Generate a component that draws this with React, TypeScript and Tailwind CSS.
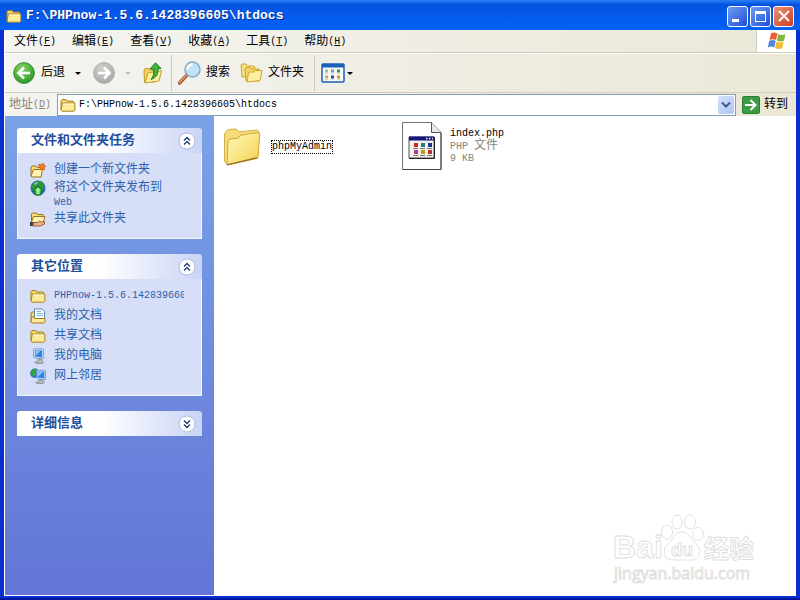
import type { ReactNode } from "react";

const SONG = "font-['Liberation_Mono','Noto_Sans_CJK_SC',monospace]";

function FolderGlyph({ className = "h-4 w-4" }: { className?: string }) {
  return (
    <svg viewBox="0 0 16 16" className={className} aria-hidden="true">
      <path d="M1 13V3.500L2 2.500h4l1.200 1.600H13l1 1V6" fill="#f6d66b" stroke="#a8801c" />
      <path d="M1 13.200 2.300 6h12.600v7.300l-.9.900H2z" fill="#fdeb9a" stroke="#a8801c" />
      <path d="M3 7h11" stroke="#fffbe0" />
    </svg>
  );
}

function NewFolderGlyph() {
  return (
    <svg viewBox="0 0 16 16" className="h-4 w-4" aria-hidden="true">
      <path d="M1 14V5l1-1h4l1 1.500h6V7" fill="#f7dc79" stroke="#99751c" />
      <path d="m1 14.200 2.500-6.700h9L11 15H2z" fill="#fff3b4" stroke="#99751c" />
      <path d="m9 2 2.500.3L13.500 1l.5 2 2 1.300-1.500 1.200V8L12 7l-2 1 .3-2.500L8.500 4z" fill="#ee7a22" stroke="#c65a12" strokeWidth=".5" />
    </svg>
  );
}

function PublishGlyph() {
  return (
    <svg viewBox="0 0 16 16" className="h-4 w-4" aria-hidden="true">
      <circle cx="8" cy="8" r="7.600" fill="#2d6fb8" />
      <path d="M1.500 5c2-4 7-5 10-3l3 4-2 3H3L.8 9zM3 2.500l4-2 2 2-3 2z" fill="#2f9440" />
      <path d="M4 3.500 7 2l1 1-3 2z" fill="#8cc6ea" />
      <path d="m8 6 5.500 5H11v4H5v-4H2.500z" fill="#2fc335" stroke="#14661e" strokeWidth=".9" />
      <path d="m8 7.800 2.800 2.700H9.500V14h-3v-3.500H5.200z" fill="#a8ee92" />
    </svg>
  );
}

function ShareGlyph() {
  return (
    <svg viewBox="0 0 16 16" className="h-4 w-4" aria-hidden="true">
      <path d="M1.500 11V3l1-1h4l1 1.500H13V5" fill="#f7dc79" stroke="#99751c" />
      <path d="m1.500 11 2-5.500H15L13 12H2z" fill="#fff3b4" stroke="#99751c" />
      <path d="M0 11h3v4H0z" fill="#3b3b4c" />
      <path d="M3 11.500h4.500l2-1.500 2 1 3-.5v2.500l-4 2H3z" fill="#eab083" stroke="#8c4a24" strokeWidth=".8" />
    </svg>
  );
}

function DocumentsGlyph() {
  return (
    <svg viewBox="0 0 16 16" className="h-4 w-4" aria-hidden="true">
      <path d="M1 14V5l1-1h3v10z" fill="#f6d66b" stroke="#a8801c" />
      <path d="M4.500 1H12l2.500 2.500V11h-10z" fill="#fff" stroke="#6487b4" />
      <path d="M6.500 3.500H11M6.500 5.500H13M6.500 7.500H13" stroke="#79b8d8" />
      <path d="m1 14 .5-5h2l1 1.500H15V14l-1 1H2z" fill="#fdeb9a" stroke="#a8801c" />
    </svg>
  );
}

function ComputerGlyph() {
  return (
    <svg viewBox="0 0 16 16" className="h-4 w-4" aria-hidden="true">
      <path d="m4 1 8.500-.5 1 1 .2 8.500-1 1L5 10 3.500 9V2z" fill="#c2dcf6" stroke="#7191c7" strokeWidth=".8" />
      <path d="m5 2.500 7-.3.2 7.300L5 8.500z" fill="#2f83e4" />
      <path d="m5.500 3 5-.2-5 5z" fill="#85c8ff" />
      <path d="M8 11h3.500v1.500l2 1-1 2H6L4.500 14 8 13z" fill="#b8b7bd" stroke="#77777f" strokeWidth=".6" />
    </svg>
  );
}

function NetworkGlyph() {
  return (
    <svg viewBox="0 0 16 16" className="h-4 w-4" aria-hidden="true">
      <circle cx="4.800" cy="5.300" r="4.700" fill="#2c70c9" />
      <path d="M.5 5c0-3 3-5 6-4L5 4l1 2-2 3zM7 3l2 1v3L7 8z" fill="#39a348" />
      <path d="m6.500 2.500 8-.5 1 1 .2 8-1 1-7-1-1.200-1z" fill="#c2dcf6" stroke="#6b8cc4" strokeWidth=".8" />
      <path d="m7.500 3.800 6.700-.3.200 7-6.900-1z" fill="#2f83e4" />
      <path d="m8 4.300 5-.2-5 4.600z" fill="#85c8ff" />
      <path d="M9 12h3.500v1l2 1-1 1.500H7L5.500 14.500 9 13.500z" fill="#b8b7bd" stroke="#77777f" strokeWidth=".6" />
    </svg>
  );
}

function WindowsFlag() {
  return (
    <svg viewBox="0 0 20 20" className="h-5 w-5" aria-hidden="true">
      <path d="M4 2.500q3-2 6.500 0L9 9Q6 7.300 2.500 9z" fill="#ea6035" />
      <path d="M11.300 3q3.500 1.700 7.200.3L17 9.700q-3.500 1.500-7.200-.2z" fill="#81b83c" />
      <path d="M2.200 10q3.300-1.800 6.500 0L7.200 16.400q-3-1.900-6.500 0z" fill="#4d87e0" />
      <path d="M9.500 10.500q3.700 1.700 7.200.2l-1.500 6.500q-3.700 1.600-7.200-.2z" fill="#f4bc36" />
    </svg>
  );
}

function RoundArrow({ disabled = false }: { disabled?: boolean }) {
  return (
    <svg viewBox="0 0 22 22" className="h-[22px] w-[22px]" aria-hidden="true">
      <defs>
        <radialGradient id={disabled ? "fwd" : "bck"} cx=".4" cy=".3" r=".7">
          <stop offset="0" stopColor={disabled ? "#d2d2cf" : "#86d764"} />
          <stop offset="1" stopColor={disabled ? "#a9a9a7" : "#2c992a"} />
        </radialGradient>
      </defs>
      <circle cx="11" cy="11" r="10.400" fill={disabled ? "url(#fwd)" : "url(#bck)"} stroke={disabled ? "#a8a8a6" : "#35882d"} strokeWidth=".9" />
      <path
        d={disabled ? "M5 11h11M11 5.500l5.500 5.500-5.500 5.500" : "M17 11H6M11 5.500 5.500 11l5.500 5.500"}
        fill="none"
        stroke="#fff"
        strokeWidth="2.600"
      />
    </svg>
  );
}

function UpFolder() {
  return (
    <svg viewBox="0 0 20 22" className="h-[22px] w-5" aria-hidden="true">
      <path d="M1.500 20 1 8l1-1.500h4L7.500 8H12v12z" fill="#f0d060" stroke="#c59b2c" />
      <path d="m2 21 3-10 13.500-2.500L16 19z" fill="#fdf0a0" stroke="#c59b2c" />
      <path d="M12.500.800 18 6.500h-3c.5 5-1.500 9-7 11 2.500-3 3.200-6 2.600-10.500H7z" fill="#42b53b" stroke="#1f7a22" />
    </svg>
  );
}

function Magnifier() {
  return (
    <svg viewBox="0 0 24 24" className="h-6 w-6" aria-hidden="true">
      <path d="m9 14-7.500 8" stroke="#a65a34" strokeWidth="3.600" strokeLinecap="round" />
      <path d="m8.500 14-7 7.500" stroke="#e79a6a" strokeWidth="1.500" strokeLinecap="round" />
      <circle cx="14.500" cy="8.500" r="7.500" fill="#bfe2f8" stroke="#8aa9c5" strokeWidth="1.500" />
      <path d="M9.500 8.500a5 5 0 0 1 5-5" fill="none" stroke="#fff" strokeWidth="2.500" />
    </svg>
  );
}

function FoldersGlyph() {
  return (
    <svg viewBox="0 0 24 20" className="h-5 w-6" aria-hidden="true">
      <path d="M2 14 1 2l1-1h4l1.500 2H14l1 2v9z" fill="#f7e07c" stroke="#d0a432" />
      <path d="M6 18 5 6l1-1.500h4L12 6h7v12z" fill="#f3d566" stroke="#d0a432" />
      <path d="m7 19 1.500-9 1-1H14l1.500-1.500h6.500L20 17.500z" fill="#fdf0a2" stroke="#d0a432" />
    </svg>
  );
}

function ViewsGlyph() {
  return (
    <svg viewBox="0 0 24 20" className="h-5 w-6" aria-hidden="true">
      <rect x="1" y="1" width="22" height="18" rx="1" fill="#f8f8f2" stroke="#1b5fb8" strokeWidth="1.500" />
      <path d="M1 1h22v3.500H1z" fill="#1b5fb8" />
      <path d="M4 6.500h3v3H4z" fill="#aab3ba" />
      <path d="M10 6.500h3v3h-3z" fill="#7c98b0" />
      <path d="M16 6.500h3v3h-3z" fill="#3b9251" />
      <path d="M4 12.500h3v3H4z" fill="#e0a05c" />
      <path d="M10 12.500h3v3h-3z" fill="#21508f" />
      <path d="M16 12.500h3v3h-3z" fill="#cf973b" />
      <path d="M4 10.500h3M10 10.500h3M16 10.500h3M4 16.500h3M10 16.500h3M16 16.500h3" stroke="#c9ccd0" strokeWidth=".8" />
    </svg>
  );
}

function Caret({ className }: { className: string }) {
  return (
    <svg viewBox="0 0 6 3" className={`h-[3px] w-1.5 ${className}`} aria-hidden="true">
      <path d="M0 0h6L3 3z" fill="currentColor" />
    </svg>
  );
}

function LargeFolder() {
  return (
    <svg viewBox="0 0 38 38" className="h-[38px] w-[38px] shrink-0" aria-hidden="true">
      <defs>
        <linearGradient id="folderFront" x1="0" y1="0" x2="1" y2="1">
          <stop offset="0" stopColor="#fffab8" />
          <stop offset="1" stopColor="#f4cf52" />
        </linearGradient>
      </defs>
      <path d="M3.500 36 1.500 33V6L3 3.500 5 1.500l8-.5 3 2.800L34 2l2 2-1 26z" fill="#f5dc78" stroke="#d3b04c" />
      <path d="M4 36.500 5 13.500q.2-2 2-2.300l8-1.200 3-3L35.500 4.500q1.500 0 1.200 2L35 28.500q-.2 1.500-1.500 2L6 36.800z" fill="url(#folderFront)" stroke="#cfa63b" />
      <path d="m4 36.800 30-7" stroke="#9b7524" strokeWidth="1.300" />
    </svg>
  );
}

function PhpFile() {
  const dots: [number, number, string][] = [
    [12, 22, "#b92f24"], [19, 22, "#237e85"], [26, 22, "#22358e"],
    [12, 29, "#b53a91"], [19, 29, "#c49b20"], [26, 29, "#b5352a"],
  ];
  return (
    <svg viewBox="0 0 40 48" className="h-12 w-10 shrink-0" aria-hidden="true">
      <path d="M.5.500h29l9.500 10v37H.5z" fill="#fff" stroke="#6f6f6f" />
      <path d="M29.500.500v10H39" fill="#e9e9e9" stroke="#555" />
      <path d="M39 11v36.500H1" fill="none" stroke="#444" />
      <path d="M7 15h25v21H7z" fill="#f4f0ec" stroke="#505050" />
      <path d="M7 14.500h25v4H7z" fill="#111a7b" />
      <path d="M24 16.500h1.500M27 16.500h1.500M30 16.500h1" stroke="#fff" strokeWidth="1.500" />
      {dots.map(([x, y, color]) => (
        <g key={`${x}-${y}`}>
          <rect x={x} y={y - 1} width="4" height="4" fill={color} />
          <path d={`M${x - 1} ${y + 4.5}h5`} stroke="#555" strokeWidth=".8" />
        </g>
      ))}
      <path d="M32.500 15v21.500H7" fill="none" stroke="#222" />
    </svg>
  );
}

function Latin({ children }: { children: ReactNode }) {
  return <span className="text-[10px]">{children}</span>;
}

function MenuItem({ label, hotkey }: { label: string; hotkey: string }) {
  return (
    <button type="button" className="flex items-center whitespace-nowrap">
      {label}
      <Latin>
        (<u className="underline-offset-1">{hotkey}</u>)
      </Latin>
    </button>
  );
}

function Panel({ title, open, children }: { title: string; open: boolean; children?: ReactNode }) {
  return (
    <section>
      <button
        type="button"
        aria-expanded={open}
        className="flex h-[25px] w-full items-center justify-between rounded-t-[3px] bg-linear-to-r from-white from-45% to-[#c9d4f6] pr-1.5 pl-3.5 text-[13px] font-bold text-[#1f4f9d]"
      >
        {title}
        <svg viewBox="0 0 18 18" className="h-[18px] w-[18px]" aria-hidden="true">
          <circle cx="9" cy="9" r="8" fill="#fff" stroke="#b4bcd8" />
          <path
            d={open ? "M6 8.500l3-3 3 3M6 12.500l3-3 3 3" : "M6 5.500l3 3 3-3M6 9.500l3 3 3-3"}
            fill="none"
            stroke="#1c3f78"
            strokeWidth="1.400"
          />
        </svg>
      </button>
      {open && (
        <ul className="flex flex-col border border-t-0 border-[#f4f6fe] bg-[#d6dff7] px-3 pt-2 pb-2.5 text-[12px] text-[#2c5fae]">
          {children}
        </ul>
      )}
    </section>
  );
}

function Task({ icon, children }: { icon: ReactNode; children: ReactNode }) {
  return (
    <li>
      <a href="#" className="flex items-start gap-2 leading-[18px]">
        <span className="shrink-0 pt-px">{icon}</span>
        <span className="min-w-0 overflow-hidden">{children}</span>
      </a>
    </li>
  );
}

const captionButton =
  "flex h-[21px] w-[21px] items-center justify-center rounded-[3px] border border-white";

export default function App() {
  return (
    <div className={`flex h-screen flex-col border-b-2 border-[#0018a0] bg-[#0a2fd0] text-[12px] text-black ${SONG}`}>
      <header className="flex h-[30px] shrink-0 items-center bg-linear-to-b from-[#2b80f5] via-[#0553e0] via-15% to-[#0462fa] pt-0.5 pr-1.5 pl-1.5">
        <FolderGlyph className="h-4 w-4 shrink-0" />
        <h1 className="grow pl-1 text-[13px] font-bold whitespace-nowrap text-white [text-shadow:1px_1px_#0a2f91]">
          F:\PHPnow-1.5.6.1428396605\htdocs
        </h1>
        <div className="flex gap-0.5">
          <button type="button" aria-label="最小化" className={`${captionButton} bg-linear-to-br from-[#6f9bf2] to-[#1f4fd6]`}>
            <span className="mt-2 mr-1 h-[3px] w-[7px] bg-white" />
          </button>
          <button type="button" aria-label="最大化" className={`${captionButton} bg-linear-to-br from-[#6f9bf2] to-[#1f4fd6]`}>
            <span className="h-[11px] w-[11px] border border-t-[3px] border-white" />
          </button>
          <button type="button" aria-label="关闭" className={`${captionButton} bg-linear-to-br from-[#ec9078] to-[#c93a16]`}>
            <svg viewBox="0 0 12 12" className="h-3 w-3" aria-hidden="true">
              <path d="m1 1 10 10M11 1 1 11" stroke="#fff" strokeWidth="2" />
            </svg>
          </button>
        </div>
      </header>

      <div className="mx-1 mb-0.5 flex min-h-0 grow flex-col border-b border-l border-white bg-linear-to-r from-[#f4f4f1] to-[#ebe8d7]">
        <nav className="flex h-[23px] shrink-0 items-stretch border-b border-[#cfccbd]">
          <div className="flex grow items-center gap-4 pt-px pl-[9px]">
            <MenuItem label="文件" hotkey="F" />
            <MenuItem label="编辑" hotkey="E" />
            <MenuItem label="查看" hotkey="V" />
            <MenuItem label="收藏" hotkey="A" />
            <MenuItem label="工具" hotkey="T" />
            <MenuItem label="帮助" hotkey="H" />
          </div>
          <div className="flex w-10 items-center justify-center border-l border-[#cfccbd] bg-white">
            <WindowsFlag />
          </div>
        </nav>

        <div className="flex h-10 shrink-0 items-center border-t border-b border-t-white border-b-[#cfccbd] pl-2 whitespace-nowrap">
          <button type="button" className="flex items-center gap-1.5">
            <RoundArrow />
            后退
          </button>
          <button type="button" aria-label="后退记录" className="ml-2.5">
            <Caret className="text-black" />
          </button>
          <button type="button" aria-label="前进" disabled className="ml-3">
            <RoundArrow disabled />
          </button>
          <button type="button" aria-label="前进记录" disabled className="ml-2.5">
            <Caret className="text-[#c3c1b7]" />
          </button>
          <button type="button" aria-label="向上" className="ml-3">
            <UpFolder />
          </button>
          <span className="ml-2 h-9 w-px bg-[#cfccbd]" />
          <button type="button" className="ml-1.5 flex items-center gap-1">
            <Magnifier />
            搜索
          </button>
          <button type="button" className="ml-2.5 flex items-center gap-1">
            <FoldersGlyph />
            文件夹
          </button>
          <span className="ml-2.5 h-9 w-px bg-[#cfccbd]" />
          <button type="button" aria-label="查看方式" className="ml-1.5 flex items-center gap-0.5">
            <ViewsGlyph />
            <Caret className="text-black" />
          </button>
        </div>

        <div className="flex h-[23px] shrink-0 items-center pr-2 pl-1">
          <label htmlFor="address" className="mr-1.5 flex items-center whitespace-nowrap text-[#85847c]">
            地址
            <Latin>
              (<u className="underline-offset-1">D</u>)
            </Latin>
          </label>
          <div className="flex h-[22px] grow items-center border border-[#7f9db9] bg-white pr-px pl-0.5">
            <FolderGlyph className="h-4 w-4 shrink-0" />
            <input
              id="address"
              type="text"
              defaultValue="F:\PHPnow-1.5.6.1428396605\htdocs"
              className="min-w-0 grow bg-transparent pl-[3px] text-[10px] outline-none"
            />
            <button
              type="button"
              aria-label="地址列表"
              className="flex h-[18px] w-4 items-center justify-center rounded-[2px] bg-linear-to-br from-[#d2e0fd] to-[#aec5f6]"
            >
              <svg viewBox="0 0 10 6" className="h-1.5 w-2.5" aria-hidden="true">
                <path d="m1 .500 4 4 4-4" fill="none" stroke="#41598a" strokeWidth="2" />
              </svg>
            </button>
          </div>
          <button type="button" className="ml-1.5 flex items-center gap-1 whitespace-nowrap">
            <svg viewBox="0 0 18 18" className="h-[18px] w-[18px]" aria-hidden="true">
              <rect x=".5" y=".5" width="17" height="17" rx="1.500" fill="#3c9c41" stroke="#2b7f35" />
              <path d="M3 9h10M8.500 4l5 5-5 5" fill="none" stroke="#fff" strokeWidth="2" />
            </svg>
            转到
          </button>
        </div>

        <div className="flex min-h-0 grow">
          <aside className="flex w-[209px] shrink-0 flex-col gap-[15px] bg-linear-to-b from-[#7ba2e7] to-[#6375d6] p-3">
            <Panel title="文件和文件夹任务" open>
              <Task icon={<NewFolderGlyph />}>创建一个新文件夹</Task>
              <Task icon={<PublishGlyph />}>
                <span className="block pt-0.5 leading-[14px]">
                  将这个文件夹发布到
                  <br />
                  <Latin>Web</Latin>
                </span>
              </Task>
              <Task icon={<ShareGlyph />}>共享此文件夹</Task>
            </Panel>
            <Panel title="其它位置" open>
              <div className="flex flex-col gap-0.5">
                <Task icon={<FolderGlyph />}>
                  <span className="block w-[130px] overflow-hidden text-[10px] whitespace-nowrap">
                    PHPnow-1.5.6.1428396605
                  </span>
                </Task>
                <Task icon={<DocumentsGlyph />}>我的文档</Task>
                <Task icon={<FolderGlyph />}>共享文档</Task>
                <Task icon={<ComputerGlyph />}>我的电脑</Task>
                <Task icon={<NetworkGlyph />}>网上邻居</Task>
              </div>
            </Panel>
            <Panel title="详细信息" open={false} />
          </aside>

          <main className="relative min-w-0 grow bg-white">
            <div className="flex items-start gap-x-5 pt-1.5 pl-2">
              <button type="button" className="flex w-40 items-center gap-2.5 pt-1.5 pl-px text-left">
                <LargeFolder />
                <span className="border border-dotted border-black text-[10px] leading-3">phpMyAdmin</span>
              </button>
              <button type="button" className="flex w-40 items-center gap-2 text-left leading-3">
                <PhpFile />
                <span className="text-[10px] text-[#85847c]">
                  <span className="block text-black">index.php</span>
                  <span className="block">
                    PHP <span className="text-[12px] leading-3">文件</span>
                  </span>
                  <span className="block">9 KB</span>
                </span>
              </button>
            </div>

            <svg
              viewBox="0 0 146 76"
              className="absolute right-10 bottom-2 h-[76px] w-[146px] font-['Liberation_Sans','Noto_Sans_CJK_SC',sans-serif]"
              aria-label="Baidu 经验"
            >
              <g fill="#fff" stroke="#dedede" strokeWidth=".9">
                <text x="3" y="47" fontSize="32" fontWeight="700">Bai</text>
                <ellipse cx="57" cy="21" rx="5.500" ry="7" />
                <ellipse cx="67" cy="11" rx="5" ry="7" />
                <ellipse cx="80" cy="11" rx="5.500" ry="7" />
                <ellipse cx="88" cy="23" rx="5.500" ry="6.500" />
                <path d="M72 21c8 0 9 8 14 12 6 5 5 15-4 16H62c-9-1-10-11-4-16 5-4 6-12 14-12z" />
                <text x="61" y="45" fontSize="18" fontWeight="700">du</text>
                <text x="94" y="47" fontSize="25" fontWeight="700">经验</text>
                <text x="4" y="68" fontSize="16" className="font-['Open_Sans',sans-serif]">jingyan.baidu.com</text>
              </g>
            </svg>
          </main>
        </div>
      </div>
    </div>
  );
}
